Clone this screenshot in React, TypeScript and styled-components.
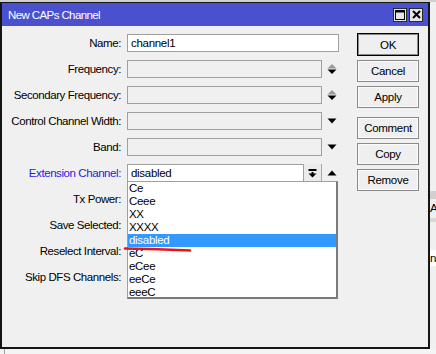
import React from 'react';
import styled, { createGlobalStyle } from 'styled-components';

const Global = createGlobalStyle`
  *, *::before, *::after { box-sizing: border-box; }
  html, body { margin: 0; padding: 0; }
  body {
    background: #d4d4d4;
    font-family: "Liberation Sans", Arial, sans-serif;
    font-size: 11px;
    color: #000;
  }
`;

const Page = styled.div`
  width: 436px;
  height: 354px;
  overflow: hidden;
  display: flex;
  flex-direction: column;
  background: #d0d0d0;
  padding-top: 2px;
`;

const Middle = styled.div`
  display: flex;
  align-items: flex-start;
`;

const Window = styled.div`
  width: 430px;
  height: 347px;
  flex: none;
  display: flex;
  flex-direction: column;
  border: 2px solid #151515;
  border-top-width: 1px;
  background: #f0f0f0;
`;

const TitleBar = styled.div`
  height: 23px;
  flex: none;
  background: #4b50cf;
  color: #fff;
  display: flex;
  align-items: center;
  padding: 0 5px 0 6px;
  font-size: 11.5px;
  letter-spacing: -0.6px;
`;

const TitleText = styled.span`
  flex: 1;
  padding-top: 1px;
`;

const TitleButtons = styled.div`
  display: flex;
  gap: 2px;
`;

const TitleButton = styled.div`
  width: 14px;
  height: 14px;
  background: #e6e6e6;
  border: 1px solid #2a2a2a;
  display: flex;
  align-items: center;
  justify-content: center;
`;

const Body = styled.div`
  flex: 1;
  position: relative;
  display: flex;
  padding-top: 7px;
`;

const FormCol = styled.div`
  width: 355px;
  flex: none;
  display: flex;
  flex-direction: column;
  gap: 8px;
  padding-top: 1px;
`;

const Row = styled.div`
  display: grid;
  grid-template-columns: 119px 1fr;
  column-gap: 6px;
  height: 18px;
  align-items: center;
`;

const Label = styled.div<{ $accent?: boolean }>`
  text-align: right;
  white-space: nowrap;
  color: ${(p) => (p.$accent ? '#2323e0' : '#000')};
  letter-spacing: -0.42px;
  font-size: 11.5px;
`;

const FieldArea = styled.div`
  display: flex;
  align-items: center;
  height: 18px;
  position: relative;
`;

const Field = styled.div<{ $w: number; $disabled?: boolean }>`
  width: ${(p) => p.$w}px;
  height: 18px;
  border: 1px solid #a0a0a0;
  background: ${(p) => (p.$disabled ? '#f0f0f0' : '#fff')};
  padding: 0 3px;
  display: flex;
  align-items: center;
  font-size: 11.5px;
  letter-spacing: -0.3px;
`;

const Control = styled.div`
  width: 12px;
  margin-left: 4px;
  display: flex;
  align-items: center;
  justify-content: center;
`;

const DropButton = styled.div`
  width: 18px;
  height: 18px;
  background: #ebebeb;
  border-right: 1px solid #a8a8a8;
  display: flex;
  align-items: center;
  justify-content: center;
`;

const ButtonCol = styled.div`
  width: 62px;
  flex: none;
  display: flex;
  flex-direction: column;
`;

const DlgButton = styled.div<{ $default?: boolean; $space?: number }>`
  height: ${(p) => (p.$default ? 23 : 22)}px;
  margin-top: ${(p) => p.$space ?? 0}px;
  border: 1px solid ${(p) => (p.$default ? '#000' : '#8a8a8a')};
  box-shadow: inset 0 0 0 1px ${(p) => (p.$default ? '#8a8a8a' : '#fbfbfb')};
  background: #efefef;
  display: flex;
  align-items: center;
  justify-content: center;
  font-size: 11.5px;
  letter-spacing: -0.3px;
`;

const DropList = styled.div`
  position: absolute;
  left: 0;
  top: 17px;
  width: 211px;
  height: 118px;
  background: #fff;
  border: 1px solid #a0a0a0;
  border-right: 2px solid #7a7a7a;
  border-bottom: 2px solid #7a7a7a;
  display: flex;
  flex-direction: column;
  z-index: 2;
`;

const Item = styled.div<{ $selected?: boolean }>`
  height: 13px;
  line-height: 13px;
  padding-left: 1px;
  font-size: 11.5px;
  letter-spacing: -0.3px;
  background: ${(p) => (p.$selected ? '#3399ff' : 'transparent')};
  color: ${(p) => (p.$selected ? '#fff' : '#000')};
`;

const Annotation = styled.svg`
  position: absolute;
  left: 118px;
  top: 218px;
  z-index: 3;
`;

const SideStrip = styled.div`
  width: 6px;
  height: 347px;
  flex: none;
  background: #f0f0f0;
  display: flex;
  flex-direction: column;
  overflow: hidden;
  font-size: 11.5px;
`;

const SideBand = styled.div<{ $h: number; $bg: string }>`
  height: ${(p) => p.$h}px;
  background: ${(p) => p.$bg};
  white-space: nowrap;
  line-height: ${(p) => p.$h}px;
  flex: none;
`;

const BottomStrip = styled.div`
  height: 5px;
  background: #f4f4f4;
  padding-left: 4px;
`;

const BottomLine = styled.div`
  width: 1px;
  height: 5px;
  background: #a0a0a0;
`;

const SpinIcon = () => (
  <svg width="10" height="12" viewBox="0 0 10 12">
    <polygon points="5,1 9.5,5.5 0.5,5.5" fill="#9a9a9a" />
    <polygon points="0.5,6.5 9.5,6.5 5,11" fill="#000" />
  </svg>
);

const DownIcon = () => (
  <svg width="10" height="6" viewBox="0 0 10 6">
    <polygon points="0.5,0.5 9.5,0.5 5,5.5" fill="#000" />
  </svg>
);

const UpIcon = () => (
  <svg width="10" height="6" viewBox="0 0 10 6">
    <polygon points="5,0.5 9.5,5.5 0.5,5.5" fill="#000" />
  </svg>
);

const BarDownIcon = () => (
  <svg width="9" height="9" viewBox="0 0 9 9">
    <rect x="0.5" y="0" width="8" height="2" fill="#000" />
    <rect x="3.5" y="3" width="2" height="2" fill="#000" />
    <polygon points="0.5,4.5 8.5,4.5 4.5,8.5" fill="#000" />
  </svg>
);

const MaxIcon = () => (
  <svg width="10" height="10" viewBox="0 0 10 10">
    <rect x="0.5" y="0.5" width="9" height="9" fill="none" stroke="#000" />
    <rect x="0.5" y="0.5" width="9" height="2" fill="#000" />
  </svg>
);

const CloseIcon = () => (
  <svg width="9" height="9" viewBox="0 0 9 9">
    <path d="M1 1 L8 8 M8 1 L1 8" stroke="#000" strokeWidth="2" />
  </svg>
);

const items = ['Ce', 'Ceee', 'XX', 'XXXX', 'disabled', 'eC', 'eCee', 'eeCe', 'eeeC'];

export default function App() {
  return (
    <>
      <Global />
      <Page>
        <Middle>
          <Window>
            <TitleBar>
              <TitleText>New CAPs Channel</TitleText>
              <TitleButtons>
                <TitleButton><MaxIcon /></TitleButton>
                <TitleButton><CloseIcon /></TitleButton>
              </TitleButtons>
            </TitleBar>
            <Body>
              <FormCol>
                <Row>
                  <Label>Name:</Label>
                  <FieldArea>
                    <Field $w={212}>channel1</Field>
                  </FieldArea>
                </Row>
                <Row>
                  <Label>Frequency:</Label>
                  <FieldArea>
                    <Field $w={195} $disabled />
                    <Control><SpinIcon /></Control>
                  </FieldArea>
                </Row>
                <Row>
                  <Label>Secondary Frequency:</Label>
                  <FieldArea>
                    <Field $w={195} $disabled />
                    <Control><SpinIcon /></Control>
                  </FieldArea>
                </Row>
                <Row>
                  <Label>Control Channel Width:</Label>
                  <FieldArea>
                    <Field $w={195} $disabled />
                    <Control><DownIcon /></Control>
                  </FieldArea>
                </Row>
                <Row>
                  <Label>Band:</Label>
                  <FieldArea>
                    <Field $w={195} $disabled />
                    <Control><DownIcon /></Control>
                  </FieldArea>
                </Row>
                <Row>
                  <Label $accent>Extension Channel:</Label>
                  <FieldArea>
                    <Field $w={177}>disabled</Field>
                    <DropButton><BarDownIcon /></DropButton>
                    <Control><UpIcon /></Control>
                    <DropList>
                      {items.map((it) => (
                        <Item key={it} $selected={it === 'disabled'}>{it}</Item>
                      ))}
                    </DropList>
                  </FieldArea>
                </Row>
                <Row>
                  <Label>Tx Power:</Label>
                  <FieldArea />
                </Row>
                <Row>
                  <Label>Save Selected:</Label>
                  <FieldArea />
                </Row>
                <Row>
                  <Label>Reselect Interval:</Label>
                  <FieldArea />
                </Row>
                <Row>
                  <Label>Skip DFS Channels:</Label>
                  <FieldArea />
                </Row>
              </FormCol>
              <ButtonCol>
                <DlgButton $default>OK</DlgButton>
                <DlgButton $space={4}>Cancel</DlgButton>
                <DlgButton $space={4}>Apply</DlgButton>
                <DlgButton $space={9}>Comment</DlgButton>
                <DlgButton $space={4}>Copy</DlgButton>
                <DlgButton $space={4}>Remove</DlgButton>
              </ButtonCol>
              <Annotation width="74" height="10" viewBox="0 0 74 10">
                <path d="M5 4.5 Q 37 5.2 70 6.5" stroke="#e8141c" strokeWidth="2.6" fill="none" strokeLinecap="round" />
              </Annotation>
            </Body>
          </Window>
          <SideStrip>
            <SideBand $h={189} $bg="#f0f0f0" />
            <SideBand $h={8} $bg="#d0d0d0" />
            <SideBand $h={19} $bg="#f0f0f0">Ac</SideBand>
            <SideBand $h={4} $bg="#d8d8d8" />
            <SideBand $h={28} $bg="#f0f0f0" />
            <SideBand $h={16} $bg="#fff">nd</SideBand>
          </SideStrip>
        </Middle>
        <BottomStrip><BottomLine /></BottomStrip>
      </Page>
    </>
  );
}
